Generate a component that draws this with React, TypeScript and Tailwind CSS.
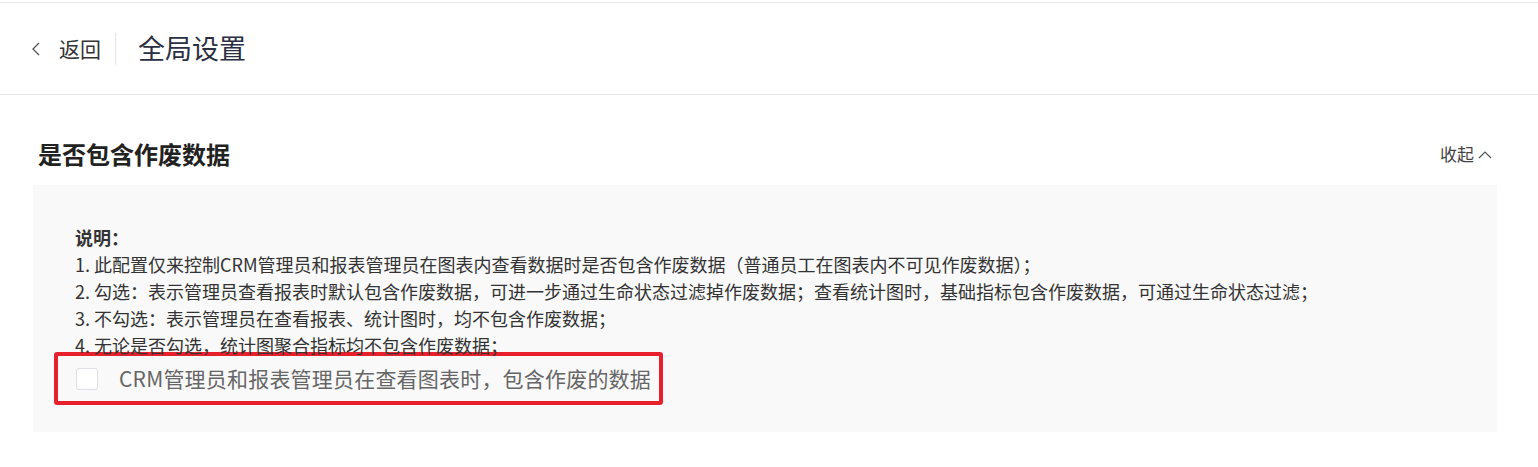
import React from "react";

const font = { fontFamily: '"Noto Sans CJK SC", "Noto Sans", sans-serif' };

export default function App() {
  const lines = [
    "1. 此配置仅来控制CRM管理员和报表管理员在图表内查看数据时是否包含作废数据（普通员工在图表内不可见作废数据）；",
    "2. 勾选：表示管理员查看报表时默认包含作废数据，可进一步通过生命状态过滤掉作废数据；查看统计图时，基础指标包含作废数据，可通过生命状态过滤；",
    "3. 不勾选：表示管理员在查看报表、统计图时，均不包含作废数据；",
    "4. 无论是否勾选，统计图聚合指标均不包含作废数据；",
  ];
  return (
    <div className="w-[1538px] h-[467px] bg-white overflow-hidden" style={font}>
      <div className="h-[2px]" />
      <div className="h-[93px] border-t border-b border-[#e4e6ee] flex items-center pl-[30px]">
        <svg width="12" height="16" viewBox="0 0 12 16" className="text-[#555]">
          <path d="M9 2 L3 8 L9 14" fill="none" stroke="currentColor" strokeWidth="1.3" />
        </svg>
        <span className="ml-[17px] text-[21px] text-[#333]">返回</span>
        <div className="ml-[14px] w-px h-[32px] bg-[#e3e4e8]" />
        <span className="ml-[22px] text-[27px] text-[#2b2f42]">全局设置</span>
      </div>
      <div className="pl-[33px] pr-[41px] pt-[42px]">
        <div className="flex items-center justify-between h-[34px]">
          <span className="pl-[5px] text-[24px] font-bold text-[#222]">是否包含作废数据</span>
          <span className="pr-[5px] flex items-center text-[17px] text-[#444]">
            收起
            <svg width="14" height="12" viewBox="0 0 14 12" className="ml-[4px] mt-[2px] text-[#555]">
              <path d="M1 9 L7 3 L13 9" fill="none" stroke="currentColor" strokeWidth="1.2" />
            </svg>
          </span>
        </div>
        <div className="mt-[14px] bg-[#f9f9f9] pl-[42px] pt-[39px] pb-[27px]">
          <div className="text-[18px] leading-[27px] text-[#333]">
            <div className="font-bold">说明：</div>
            {lines.map((l) => (
              <div key={l}>{l}</div>
            ))}
          </div>
          <div className="-mt-[7px] -ml-[21px] w-fit h-[53px] border-[4px] border-[#e8202c] rounded-[3px] flex items-center pl-[18px] pr-[8px]">
            <div className="w-[22px] h-[22px] bg-white border border-[#dcdfe6] rounded-[3px]" />
            <span className="ml-[21px] text-[21px] tracking-[0.2px] text-[#666]">CRM管理员和报表管理员在查看图表时，包含作废的数据</span>
          </div>
        </div>
      </div>
    </div>
  );
}
